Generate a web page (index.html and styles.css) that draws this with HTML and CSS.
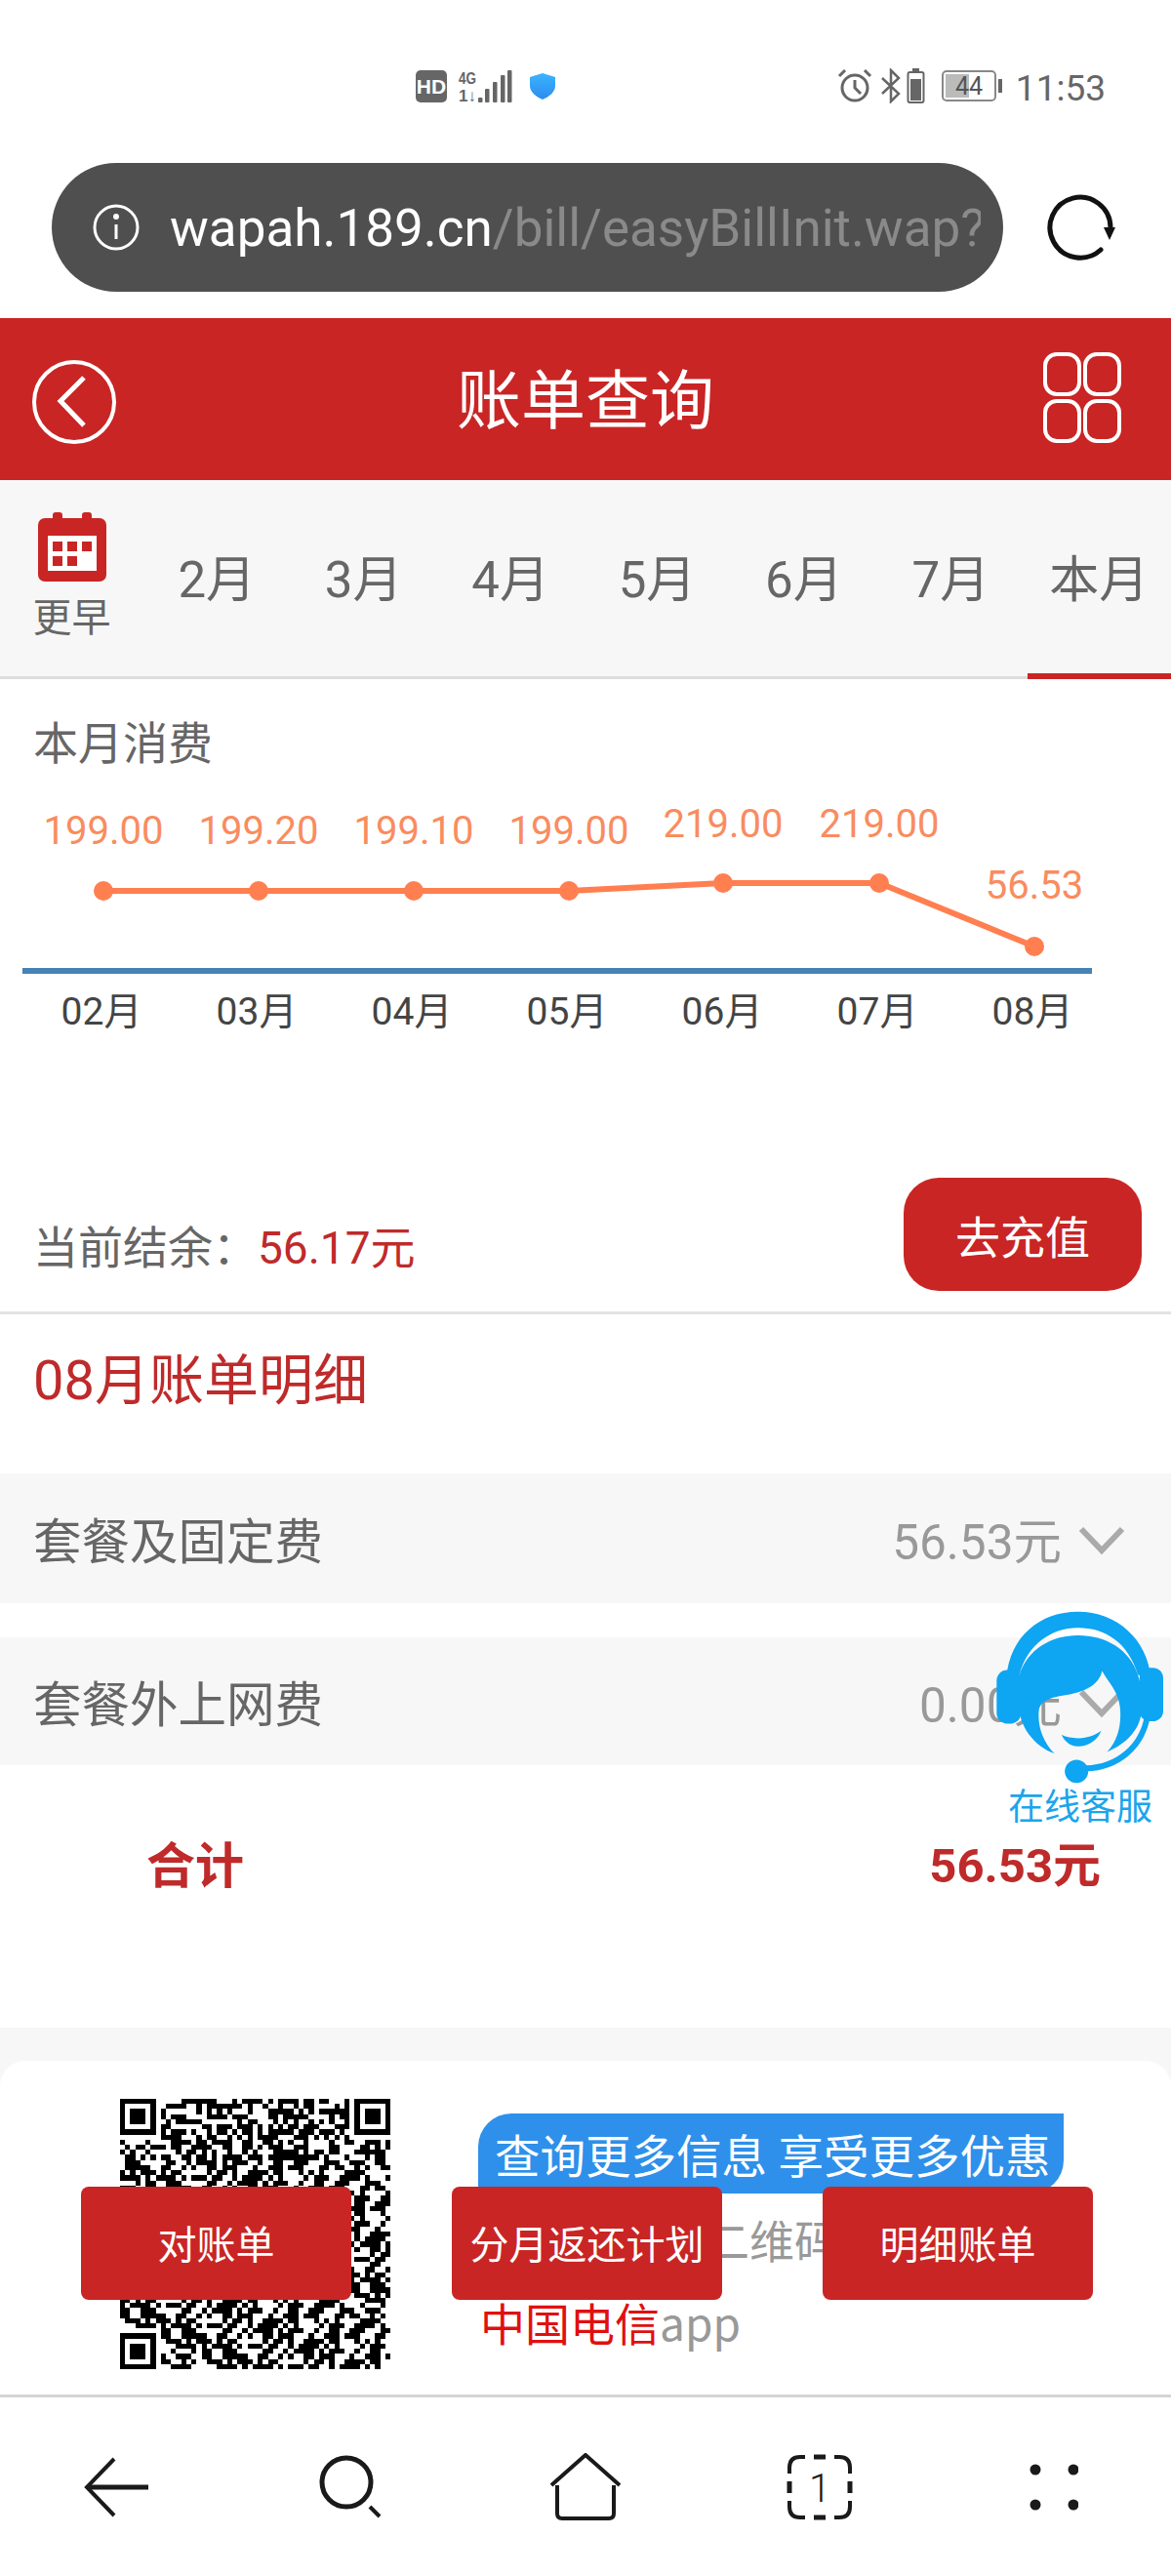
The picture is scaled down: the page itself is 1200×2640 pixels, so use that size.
FILE: index.html
```html
<!DOCTYPE html>
<html>
  <head>
    <title>账单查询</title>
    <meta charset="utf-8" />
    <meta name="viewport" content="width=device-width, initial-scale=1.0" />
    <link rel="stylesheet" href="styles.css">
  </head>
  <body>
    <div class="status">
      <div class="status-left">
        <svg width="32" height="33" viewBox="0 0 32 33"><rect width="32" height="33" rx="5" fill="#666"/><text x="16" y="24" class="hd">HD</text></svg>
        <svg width="58" height="40" viewBox="0 -2 58 40">
          <text x="1" y="16" class="net" textLength="18" lengthAdjust="spacingAndGlyphs">4G</text>
          <text x="1" y="34" class="net" textLength="18" lengthAdjust="spacingAndGlyphs">1↓</text>
          <g fill="#666"><rect x="21" y="30" width="4.5" height="5" rx="1"/><rect x="28" y="21" width="4.5" height="14" rx="1"/><rect x="36" y="14" width="4.5" height="21" rx="1"/><rect x="44" y="7" width="4.5" height="28" rx="1"/><rect x="51" y="2" width="4.5" height="33" rx="1"/></g>
        </svg>
        <svg class="shield" width="28" height="28" viewBox="0 0 28 28">
          <defs><linearGradient id="shield-fill" x1="0" y1="0" x2="0" y2="1"><stop offset="0" stop-color="#3cb4ff"/><stop offset="1" stop-color="#2a8cf0"/></linearGradient></defs>
          <path d="M14 1 L27 5 V14 C27 20 21 25 14 28 C7 25 1 20 1 14 V5 Z" fill="url(#shield-fill)"/>
        </svg>
      </div>
      <div class="status-right">
        <svg width="36" height="36" viewBox="0 0 36 36" fill="none" stroke="#666" stroke-width="3"><circle cx="18" cy="20" r="13"/><path d="M18 12 V20 L24 26 M2 8 L8 2 M34 8 L28 2"/></svg>
        <svg class="bt" width="22" height="36" viewBox="0 0 22 36" fill="none" stroke="#666" stroke-width="2.5"><path d="M2 10 L19 26 L11 34 V2 L19 10 L2 26"/></svg>
        <svg class="small-batt" width="20" height="36" viewBox="0 0 20 36"><rect x="6" y="0" width="7" height="3" fill="#666"/><rect x="1.5" y="4" width="16" height="31" rx="2" fill="none" stroke="#666" stroke-width="2"/><rect x="4" y="11" width="11" height="22" fill="#666"/></svg>
        <svg class="battery" width="62" height="32" viewBox="0 0 62 32"><rect x="1" y="1" width="54" height="30" rx="4" fill="none" stroke="#888" stroke-width="2"/><rect x="4" y="4" width="24" height="24" fill="#bbb"/><rect x="58" y="9" width="4" height="14" fill="#666"/><text x="28" y="25" class="batt">44</text></svg>
        <span class="clock">11:53</span>
      </div>
    </div>

    <div class="url-row">
      <div class="url-pill">
        <svg width="48" height="48" viewBox="0 0 48 48" fill="none" stroke="#fff" stroke-width="3"><circle cx="24" cy="24" r="22"/><path d="M24 21 V36"/><circle cx="24" cy="13" r="1.5" fill="#fff"/></svg>
        <div class="url-text"><span class="host">wapah.189.cn</span>/bill/easyBillInit.wap?</div>
      </div>
      <svg class="reload" width="70" height="68" viewBox="0 0 70 68" fill="none" stroke="#111" stroke-width="5" stroke-linecap="round"><path d="M55 57 A31 31 0 1 1 65 34"/><path d="M58 34 L70 34 L64 47 Z" fill="#111" stroke="none"/></svg>
    </div>

    <header class="topbar">
      <svg class="back-icon" width="86" height="86" viewBox="0 0 86 86" fill="none" stroke="#fff" stroke-width="4"><circle cx="43" cy="43" r="41"/><path d="M53 18 L29 42 L53 67" stroke-width="5"/></svg>
      <h1>账单查询</h1>
      <svg class="grid-icon" width="80" height="93" viewBox="0 0 80 93" fill="none" stroke="#fff" stroke-width="4"><rect x="2" y="2" width="35" height="41" rx="12"/><rect x="43" y="2" width="35" height="41" rx="12"/><rect x="2" y="50" width="35" height="41" rx="12"/><rect x="43" y="50" width="35" height="41" rx="12"/></svg>
    </header>

    <nav class="tabs">
      <div class="tab-early">
        <svg width="70" height="71" viewBox="0 0 70 71"><rect x="0" y="6" width="70" height="65" rx="7" fill="#c92525"/><rect x="15" y="0" width="10" height="12" rx="3" fill="#c92525"/><rect x="45" y="0" width="10" height="12" rx="3" fill="#c92525"/><rect x="10" y="24" width="50" height="36" fill="#fff"/><g fill="#c92525"><rect x="15" y="30" width="10" height="10"/><rect x="30" y="30" width="10" height="10"/><rect x="45" y="30" width="10" height="10"/><rect x="15" y="45" width="10" height="10"/><rect x="30" y="45" width="10" height="10"/></g></svg>
        <span>更早</span>
      </div>
      <div class="tab">2月</div>
      <div class="tab">3月</div>
      <div class="tab">4月</div>
      <div class="tab">5月</div>
      <div class="tab">6月</div>
      <div class="tab">7月</div>
      <div class="tab tab-active">本月</div>
    </nav>

    <section class="usage">
      <h2>本月消费</h2>
      <svg class="chart" width="1200" height="412" viewBox="0 0 1200 412">
        <rect x="23" y="204" width="1096" height="6" fill="#4682b4"/>
        <polyline points="106,125 265,125 424,125 583,125 741,117 901,117 1060,182" fill="none" stroke="#ff7f50" stroke-width="6"/>
        <g fill="#ff7f50">
          <circle cx="106" cy="125" r="10"/><circle cx="265" cy="125" r="10"/><circle cx="424" cy="125" r="10"/><circle cx="583" cy="125" r="10"/><circle cx="741" cy="117" r="10"/><circle cx="901" cy="117" r="10"/><circle cx="1060" cy="182" r="10"/>
        </g>
        <g class="chart-value">
          <text x="106" y="77">199.00</text><text x="265" y="77">199.20</text><text x="424" y="77">199.10</text><text x="583" y="77">199.00</text><text x="741" y="70">219.00</text><text x="901" y="70">219.00</text><text x="1060" y="133">56.53</text>
        </g>
        <g class="chart-month">
          <text x="104" y="262">02月</text><text x="263" y="262">03月</text><text x="422" y="262">04月</text><text x="581" y="262">05月</text><text x="740" y="262">06月</text><text x="899" y="262">07月</text><text x="1058" y="262">08月</text>
        </g>
      </svg>
      <div class="balance">
        <div class="balance-text">当前结余：<span class="red">56.17元</span></div>
        <div class="recharge">去充值</div>
      </div>
    </section>

    <section class="detail">
      <h3>08月账单明细</h3>
      <div class="fee-row">
        <span>套餐及固定费</span>
        <div class="fee-amount">56.53元<svg width="48" height="30" viewBox="0 0 48 30" fill="none" stroke="#aaa" stroke-width="6"><path d="M3 3 L24 25 L45 3"/></svg></div>
      </div>
      <div class="fee-row fee-row-short">
        <span>套餐外上网费</span>
        <div class="fee-amount">0.00元<svg width="48" height="30" viewBox="0 0 48 30" fill="none" stroke="#aaa" stroke-width="6"><path d="M3 3 L24 25 L45 3"/></svg></div>
      </div>
      <div class="total">
        <span>合计</span>
        <span class="total-sum">56.53元</span>
      </div>
    </section>

    <section class="promo">
      <div class="promo-card">
        <svg id="qr" class="qr" width="277" height="277" viewBox="0 0 53 53" shape-rendering="crispEdges"></svg>
        <div class="promo-text">
          <div class="bubble">查询更多信息 享受更多优惠</div>
          <p>请长按识别二维码</p>
          <p class="app-line"><span class="app-name">中国电信</span><span class="app-latin">app</span></p>
        </div>
        <div class="actions">
          <div class="action">对账单</div>
          <div class="action">分月返还计划</div>
          <div class="action">明细账单</div>
        </div>
      </div>
    </section>

    <footer class="toolbar">
      <svg width="68" height="64" viewBox="0 0 68 64" fill="none" stroke="#1a1a1a" stroke-width="4"><path d="M31 3 L3 32 L31 61"/><path d="M4 32 H66" stroke-width="5"/></svg>
      <svg width="66" height="66" viewBox="0 0 66 66" fill="none" stroke="#1a1a1a" stroke-width="5"><circle cx="28" cy="28" r="25"/><path d="M52 53 L62 63" stroke-width="4"/></svg>
      <svg width="74" height="70" viewBox="0 0 74 70" fill="none" stroke="#1a1a1a" stroke-width="4"><path d="M2 33 L37 2 L72 33"/><path d="M8 33 V62 Q8 67 13 67 H61 Q66 67 66 62 V33"/></svg>
      <svg class="tab-count" width="68" height="68" viewBox="0 0 68 68" fill="none" stroke="#1a1a1a" stroke-width="4">
        <path d="M3 20 V14 Q3 3 14 3 H19 M49 3 H54 Q65 3 65 14 V20 M3 48 V54 Q3 65 14 65 H19 M49 65 H54 Q65 65 65 54 V48"/>
        <path d="M28 3 H40 M28 65 H40 M3 28 V40 M65 28 V40" stroke-width="5"/>
        <text x="34" y="49" class="tab-num">1</text>
      </svg>
      <svg width="50" height="48" viewBox="0 0 50 48" fill="#1a1a1a"><circle cx="6" cy="6" r="5.5"/><circle cx="45" cy="6" r="5.5"/><circle cx="6" cy="42" r="5.5"/><circle cx="45" cy="42" r="5.5"/></svg>
    </footer>

    <div class="agent">
      <svg width="178" height="182" viewBox="205 85 535 545" fill="#0ea5f2">
        <path d="M245 300 C255 170 350 95 465 95 C585 95 680 180 690 300 L650 290 C620 190 550 145 465 145 C385 145 310 195 285 290 Z"/>
        <rect x="215" y="275" width="75" height="165" rx="32"/>
        <rect x="655" y="268" width="73" height="165" rx="32"/>
        <path d="M285 290 C310 210 385 168 465 168 C550 168 625 210 650 290 C668 345 670 400 650 445 C630 485 595 510 555 527 C590 490 600 440 595 390 C590 340 560 315 540 278 C530 320 490 340 440 350 C390 358 350 365 345 400 C340 450 360 500 393 532 C330 510 290 450 285 400 Z"/>
        <path d="M415 475 C450 490 500 490 537 462 C525 495 490 512 465 510 C440 510 425 495 415 475 Z"/>
        <path d="M678 425 C660 510 590 575 490 578" fill="none" stroke="#0ea5f2" stroke-width="18"/>
        <circle cx="461" cy="587" r="36"/>
      </svg>
      <span>在线客服</span>
    </div>

    <script type="text/javascript">
      // pseudo random modules, only the three finders are real
      function makeQr() {
        var size = 53;
        var seed = 20190811;
        var d = "";
        function inFinder(x, y) {
          return (x < 8 && y < 8) || (x >= size - 8 && y < 8) || (x < 8 && y >= size - 8);
        }
        for (var y = 0; y < size; y++) {
          for (var x = 0; x < size; x++) {
            seed = (seed * 1103515245 + 12345) & 0x7fffffff;
            if (!inFinder(x, y) && (seed >> 16) % 100 < 52) {
              d += "M" + x + " " + y + "h1v1h-1z";
            }
          }
        }
        [[0, 0], [46, 0], [0, 46]].forEach(function (p) {
          d += "M" + p[0] + " " + p[1] + "h7v7h-7zM" + (p[0] + 1) + " " + (p[1] + 1) + "v5h5v-5z";
          d += "M" + (p[0] + 2) + " " + (p[1] + 2) + "h3v3h-3z";
        });
        var path = document.createElementNS("http://www.w3.org/2000/svg", "path");
        path.setAttribute("d", d);
        path.setAttribute("fill-rule", "evenodd");
        document.getElementById("qr").appendChild(path);
      }

      makeQr();
    </script>
  </body>
</html>
```

FILE: styles.css
```css
:root {
  --red: #c92525;
  --dark-red: #bf2a2a;
  --grey-bg: #f7f7f7;
  --text: #666;
}
* {
  box-sizing: border-box;
}
body {
  margin: 0;
  width: 1200px;
  height: 2640px;
  overflow: hidden;
  position: relative;
  background: #fff;
  color: var(--text);
  font-family: Roboto, "Noto Sans CJK SC", sans-serif;
}
h1, h2, h3, p {
  margin: 0;
  font-weight: 400;
}
svg {
  display: block;
  flex: none;
}

/* status bar */
.status {
  height: 167px;
  padding: 70px 67px 0 426px;
  display: flex;
  justify-content: space-between;
  align-items: flex-start;
}
.status-left,
.status-right {
  display: flex;
  align-items: center;
  height: 36px;
}
.status-left {
  gap: 11px;
}
.shield {
  margin-left: 4px;
}
.bt {
  margin-left: 8px;
}
.small-batt {
  margin-left: 5px;
}
.battery {
  margin-left: 16px;
}
.clock {
  font-size: 37px;
  margin-left: 14px;
  padding-top: 5px;
  line-height: 36px;
}
.hd {
  font: 700 21px "Liberation Sans", sans-serif;
  fill: #fff;
  text-anchor: middle;
}
.net {
  font: 700 17px "Liberation Sans", sans-serif;
  fill: #666;
}
.batt {
  font: 400 25px Roboto, sans-serif;
  fill: #555;
  text-anchor: middle;
}

/* url bar */
.url-row {
  height: 159px;
  padding: 0 0 27px 53px;
  display: flex;
  align-items: center;
}
.url-pill {
  width: 975px;
  height: 132px;
  border-radius: 66px;
  background: #4f4f4f;
  padding: 0 23px 0 42px;
  display: flex;
  align-items: center;
  gap: 31px;
  overflow: hidden;
}
.url-text {
  font-size: 53px;
  color: #8a8a8a;
  white-space: nowrap;
  overflow: hidden;
  padding-top: 2px;
}
.host {
  color: #fff;
}
.reload {
  margin-left: 45px;
}

/* red header */
.topbar {
  height: 166px;
  background: var(--red);
  padding: 0 51px;
  display: grid;
  grid-template-columns: 1fr auto 1fr;
  align-items: center;
}
.back-icon {
  margin: 5px 0 0 -18px;
}
.topbar h1 {
  font-size: 66px;
  color: #fff;
  line-height: 80px;
  padding-top: 5px;
}
.grid-icon {
  justify-self: end;
  margin-top: -3px;
}

/* month tabs */
.tabs {
  height: 204px;
  background: var(--grey-bg);
  border-bottom: 3px solid #ddd;
  display: grid;
  grid-template-columns: 147px repeat(7, 1fr);
}
.tab {
  font-size: 51px;
  display: flex;
  align-items: center;
  justify-content: center;
  padding-bottom: 9px;
}
.tab-active {
  border-bottom: 6px solid var(--red);
  height: 204px;
  margin-left: 3px;
  padding-bottom: 3px;
}
.tab-early {
  padding-top: 33px;
  display: flex;
  flex-direction: column;
  align-items: center;
  font-size: 40px;
  line-height: 46px;
  gap: 15px;
}

/* usage chart */
.usage {
  padding-top: 40px;
  border-bottom: 3px solid #e3e3e3;
}
.usage h2 {
  padding-left: 34px;
  font-size: 46px;
  line-height: 52px;
}
.chart-value text {
  font-size: 40px;
  fill: #f98c5f;
  text-anchor: middle;
}
.chart-month text {
  font-size: 39px;
  fill: #444;
  text-anchor: middle;
}
.balance {
  height: 144px;
  padding: 7px 30px 21px 34px;
  display: flex;
  justify-content: space-between;
  align-items: center;
}
.balance-text {
  font-size: 46px;
  padding-top: 19px;
}
.red {
  color: var(--dark-red);
}
.recharge {
  width: 244px;
  height: 116px;
  border-radius: 36px;
  background: var(--red);
  color: #fff;
  font-size: 46px;
  display: flex;
  align-items: center;
  justify-content: center;
}

/* bill detail */
.detail h3 {
  height: 163px;
  padding: 40px 0 0 34px;
  font-size: 56px;
  line-height: 56px;
  color: var(--dark-red);
}
.fee-row {
  height: 133px;
  margin-bottom: 35px;
  padding: 0 47px 0 34px;
  background: var(--grey-bg);
  font-size: 49.5px;
  display: flex;
  justify-content: space-between;
  align-items: center;
}
.fee-row-short {
  height: 131px;
  margin-bottom: 0;
}
.fee-amount {
  color: #999;
  display: flex;
  align-items: center;
  gap: 17px;
}
.fee-amount svg {
  margin-top: 5px;
}
.total {
  height: 269px;
  padding: 78px 72px 0 150px;
  font-size: 50px;
  line-height: 52px;
  font-weight: 700;
  color: var(--dark-red);
  display: flex;
  justify-content: space-between;
  align-items: flex-start;
}
.total-sum {
  font-size: 49px;
}

/* promo card */
.promo {
  height: 376px;
  background: var(--grey-bg);
  padding-top: 34px;
}
.promo-card {
  position: relative;
  height: 342px;
  background: #fff;
  border-radius: 26px 26px 0 0;
  padding: 39px 0 0 123px;
  display: flex;
}
.promo-text {
  margin-left: 90px;
  padding-top: 15px;
  width: 600px;
  font-size: 46px;
  color: #999;
  line-height: 84px;
}
.bubble {
  height: 82px;
  margin-bottom: 8px;
  padding-left: 17px;
  background: #2e90ea;
  color: #fff;
  white-space: nowrap;
  font-size: 46.5px;
  line-height: 90px;
  border-radius: 34px 0 34px 0;
}
.promo-text p {
  white-space: nowrap;
  padding-left: 2px;
}
.promo-text .app-line {
  margin-top: -3px;
}
.app-name {
  color: #e01010;
}
.app-latin {
  font-family: "Noto Sans CJK SC", sans-serif;
}
.actions {
  position: absolute;
  left: 83px;
  top: 129px;
  display: flex;
  gap: 103px;
}
.action {
  width: 277px;
  height: 116px;
  border-radius: 8px;
  background: var(--red);
  color: #fff;
  font-size: 40px;
  padding-bottom: 2px;
  display: flex;
  align-items: center;
  justify-content: center;
}

/* bottom toolbar */
.toolbar {
  height: 186px;
  border-top: 3px solid #d5d5d5;
  background: #fff;
  display: grid;
  grid-template-columns: repeat(5, 240px);
  align-items: center;
  justify-items: center;
}
.tab-num {
  font: 300 40px Roboto, sans-serif;
  fill: #1a1a1a;
  stroke: none;
  text-anchor: middle;
}

/* floating service badge */
.agent {
  position: absolute;
  left: 1018px;
  top: 1648px;
  width: 178px;
  display: flex;
  flex-direction: column;
  align-items: center;
  color: #1aa5ec;
  font-size: 37px;
  line-height: 40px;
  gap: 3px;
}
.agent span {
  white-space: nowrap;
}
```
